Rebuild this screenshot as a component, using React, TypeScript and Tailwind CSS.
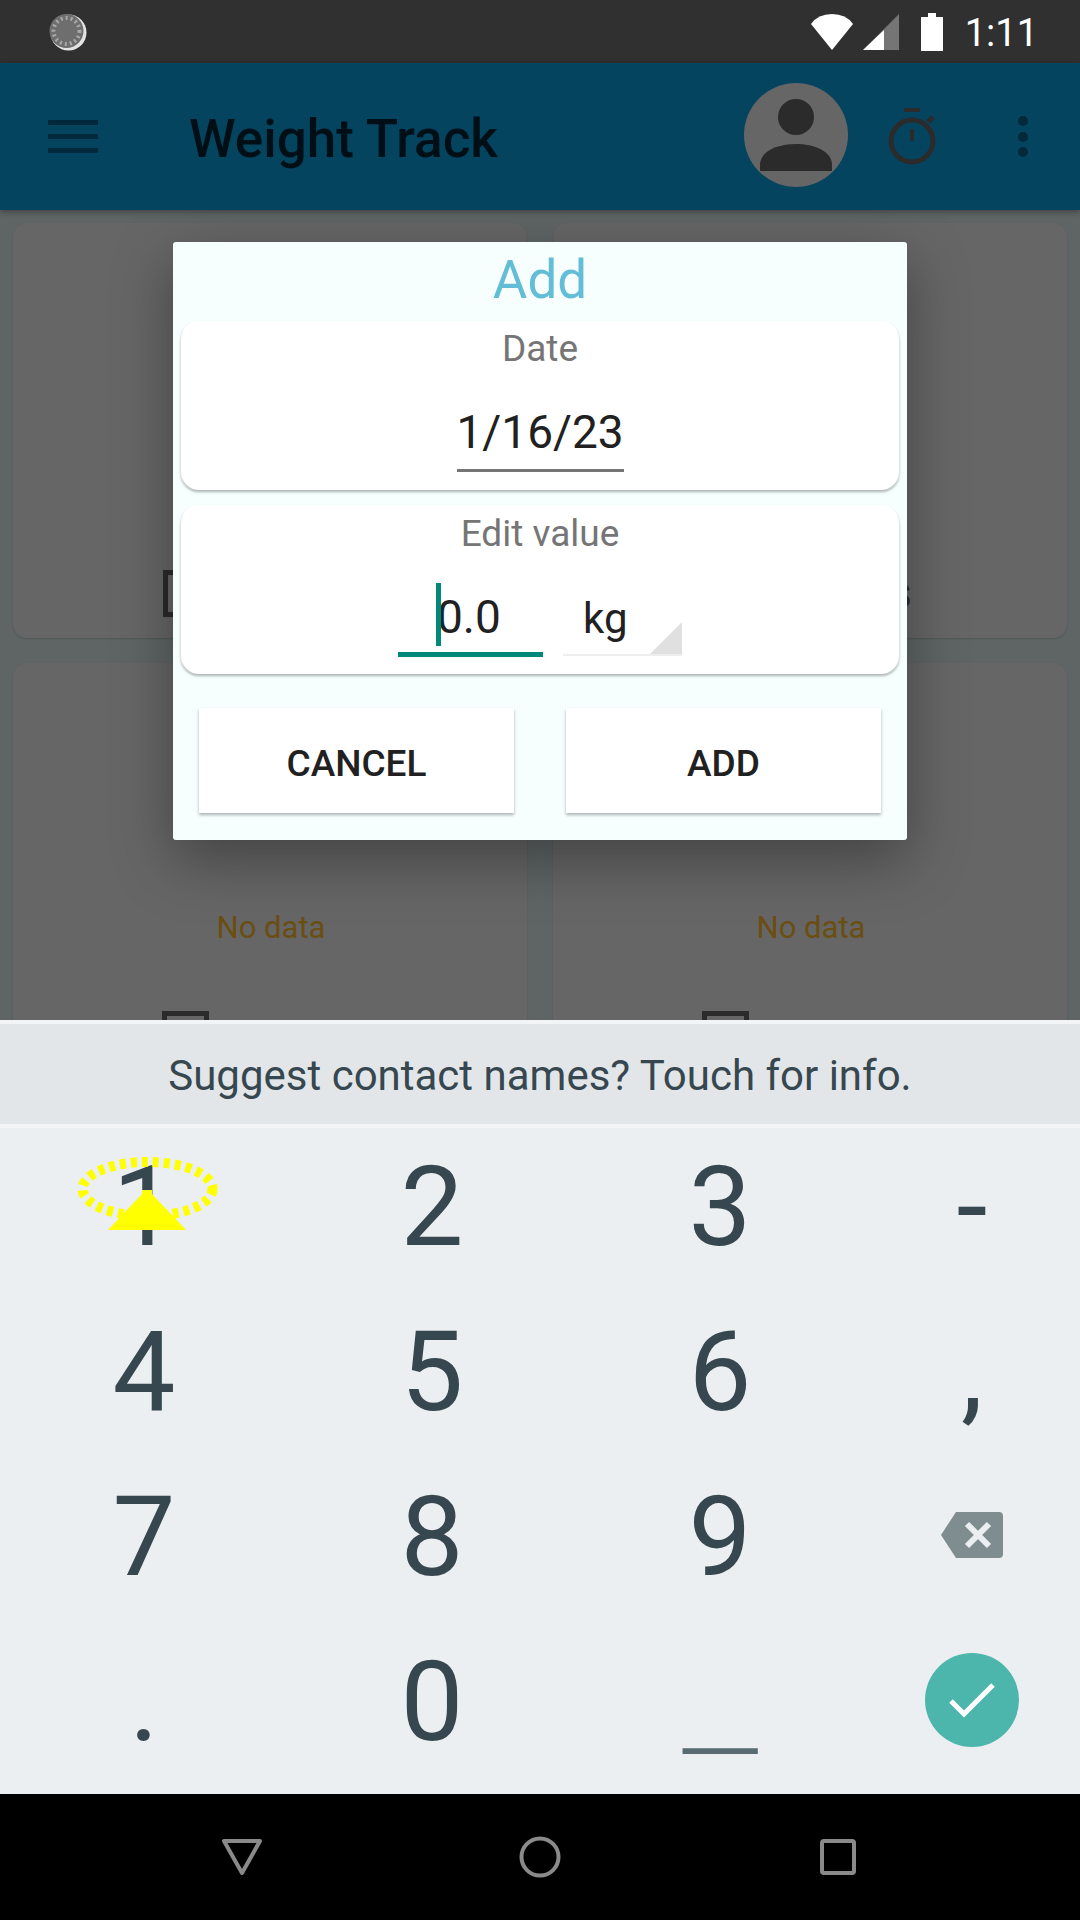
import React from 'react';

const digitClass = 'flex items-center justify-center pb-[8px] text-[112px] leading-none text-[#37474f]';

function StatusBar() {
  return (
    <div className="h-[63px] shrink-0 bg-[#303030] flex items-center pl-[49px] pr-[42px]">
      {/* sync spinner */}
      <svg width="38" height="38" viewBox="0 0 38 38">
        <circle cx="19.5" cy="19.5" r="18" fill="#e4e4e4" />
        <circle cx="17.5" cy="18" r="17" fill="#6e6e6e" />
        <circle cx="17.5" cy="18" r="13" fill="none" stroke="#a8a8a8" strokeWidth="4" strokeDasharray="2 3" />
      </svg>
      <div className="flex-1" />
      <svg width="44" height="38" viewBox="0 0 44 38" className="mr-[9px]">
        <path d="M22 37 L1 11 Q8 1 22 1 Q36 1 43 11 Z" fill="#fff" />
      </svg>
      <svg width="36" height="36" viewBox="0 0 36 36" className="mr-[22px]">
        <path d="M36 0 V36 H0 Z" fill="#757575" />
        <path d="M21 16 V36 H0 Z" fill="#fff" />
      </svg>
      <svg width="22" height="38" viewBox="0 0 22 38" className="mr-[22px]">
        <path d="M7 0 H15 V4 H22 V38 H0 V4 H7 Z" fill="#fff" />
      </svg>
      <span className="pt-[2px] text-[38px] leading-none text-white">1:11</span>
    </div>
  );
}

function AppBar() {
  return (
    <div className="h-[147px] shrink-0 bg-[#04445f] flex items-center z-10 shadow-[0_2px_6px_rgba(0,0,0,0.35)]">
      <div className="w-[48px]" />
      <div className="w-[50px] flex flex-col gap-[9px]">
        <div className="h-[5px] bg-[#02293b]" />
        <div className="h-[5px] bg-[#02293b]" />
        <div className="h-[5px] bg-[#02293b]" />
      </div>
      <span className="ml-[91px] pt-[6px] text-[53px] font-medium leading-none text-[#000f16]">Weight Track</span>
      <div className="flex-1" />
      <div className="mb-[3px] w-[104px] h-[104px] rounded-full bg-[#666666] flex items-center justify-center">
        <svg width="72" height="72" viewBox="0 0 72 72">
          <circle cx="36" cy="18" r="18" fill="#2b2b2b" />
          <path d="M0 72 V66 C0 52 18 45 36 45 C54 45 72 52 72 66 V72 Z" fill="#2b2b2b" />
        </svg>
      </div>
      {/* stopwatch */}
      <svg width="52" height="58" viewBox="0 0 52 58" className="ml-[39px]" fill="none" stroke="#2b2b2b">
        <circle cx="25" cy="33" r="21" strokeWidth="5" />
        <path d="M17 2 H33" strokeWidth="4" />
        <path d="M25 21 V33" strokeWidth="4" />
        <path d="M41 14 L46 9" strokeWidth="5" />
      </svg>
      <div className="ml-[79px] mr-[52px] flex flex-col gap-[5.5px]">
        <div className="w-[10px] h-[10px] rounded-full bg-[#02293b]" />
        <div className="w-[10px] h-[10px] rounded-full bg-[#02293b]" />
        <div className="w-[10px] h-[10px] rounded-full bg-[#02293b]" />
      </div>
    </div>
  );
}

function DimmedCards() {
  return (
    <main className="flex-1 overflow-hidden bg-[#5f6565] px-[13px] pt-[13px] grid grid-cols-2 gap-x-[26px] gap-y-[25px] content-start">
      <div className="h-[415px] rounded-[14px] bg-[#666666] shadow-[0_1px_2px_rgba(0,0,0,0.15)] relative">
        <div className="absolute left-[150px] top-[347px] w-[47px] h-[47px] border-[5px] border-[#2b2b2b]" />
      </div>
      <div className="h-[415px] rounded-[14px] bg-[#666666] shadow-[0_1px_2px_rgba(0,0,0,0.15)] relative">
        <span className="absolute right-[155px] top-[346px] text-[46px] leading-none text-[#2b2b2b]">s</span>
      </div>
      <div className="h-[415px] rounded-[14px] bg-[#666666] shadow-[0_1px_2px_rgba(0,0,0,0.15)] flex flex-col items-center pt-[249px]">
        <span className="pl-[2px] text-[31px] leading-none text-[#6b4e12]">No data</span>
        <div className="self-start ml-[149px] mt-[68px] w-[47px] h-[47px] border-[5px] border-[#2b2b2b]" />
      </div>
      <div className="h-[415px] rounded-[14px] bg-[#666666] shadow-[0_1px_2px_rgba(0,0,0,0.15)] flex flex-col items-center pt-[249px]">
        <span className="pl-[2px] text-[31px] leading-none text-[#6b4e12]">No data</span>
        <div className="self-start ml-[149px] mt-[68px] w-[47px] h-[47px] border-[5px] border-[#2b2b2b]" />
      </div>
    </main>
  );
}

function AddDialog() {
  return (
    <div className="absolute left-[173px] top-[242px] w-[734px] h-[598px] rounded-[3px] bg-[#f6fffe] shadow-[0_20px_60px_rgba(0,0,0,0.35)] px-[8px] flex flex-col">
      <div className="h-[79px] pb-[2px] flex items-center justify-center text-[53px] leading-none text-[#64bdd6]">Add</div>
      <div className="h-[169px] rounded-[18px] bg-white shadow-[0_2px_3px_rgba(0,0,0,0.3)] flex flex-col items-center">
        <span className="mt-[5px] text-[37px] leading-[46px] text-[#757575]">Date</span>
        <span className="mt-[31px] text-[46px] leading-[58px] pb-[8px] text-[#212121] border-b-[3px] border-[#757575] w-[167px] text-center">1/16/23</span>
      </div>
      <div className="mt-[15px] h-[169px] rounded-[18px] bg-white shadow-[0_2px_3px_rgba(0,0,0,0.3)] flex flex-col items-center">
        <span className="mt-[6px] text-[37px] leading-[46px] text-[#757575]">Edit value</span>
        <div className="mt-[20px] flex items-end">
          <div className="w-[145px] h-[80px] border-b-[5px] border-[#00897b] pl-[39px] pt-[11px] relative">
            <div className="absolute left-[38px] top-[6px] w-[5px] h-[63px] bg-[#00897b]" />
            <span className="block text-[46px] leading-[58px] text-[#212121]">0.0</span>
          </div>
          <div className="ml-[20px] mb-[1px] w-[119px] h-[79px] border-b-[2px] border-[#eeeeee] pl-[20px] pt-[13px] relative">
            <span className="block text-[42px] leading-[58px] text-[#212121]">kg</span>
            <svg width="32" height="32" viewBox="0 0 32 32" className="absolute right-0 bottom-0">
              <path d="M32 0 V32 H0 Z" fill="#e0e0e0" />
            </svg>
          </div>
        </div>
      </div>
      <div className="mt-[34px] px-[18px] grid grid-cols-2 gap-[52px]">
        <div className="h-[105px] pt-[5px] bg-white shadow-[0_2px_3px_rgba(0,0,0,0.3)] flex items-center justify-center text-[37px] font-medium leading-none text-[#212121]">CANCEL</div>
        <div className="h-[105px] pt-[5px] bg-white shadow-[0_2px_3px_rgba(0,0,0,0.3)] flex items-center justify-center text-[37px] font-medium leading-none text-[#212121]">ADD</div>
      </div>
    </div>
  );
}

function Keyboard() {
  return (
    <div className="shrink-0 bg-[#eceff1] relative">
      <div className="h-[108px] pt-[3px] border-y-[4px] border-y-[#f2f4f5] bg-[#e2e6e9] flex items-center justify-center text-[42px] leading-none text-[#37474f]">
        Suggest contact names? Touch for info.
      </div>
      <div className="h-[666px] grid grid-cols-[288px_288px_288px_216px] grid-rows-[repeat(4,165px)]">
        <div className={digitClass}>1</div>
        <div className={digitClass}>2</div>
        <div className={digitClass}>3</div>
        <div className={digitClass}>-</div>
        <div className={digitClass}>4</div>
        <div className={digitClass}>5</div>
        <div className={digitClass}>6</div>
        <div className={digitClass}>,</div>
        <div className={digitClass}>7</div>
        <div className={digitClass}>8</div>
        <div className={digitClass}>9</div>
        <div className="flex items-center justify-center pb-[12px]">
          <svg width="64" height="48" viewBox="0 0 64 48">
            <path d="M16 1 H59 Q63 1 63 5 V43 Q63 47 59 47 H16 L1 24 Z" fill="#7f8c90" />
            <path d="M27 13 L49 35 M49 13 L27 35" stroke="#eceff1" strokeWidth="6" />
          </svg>
        </div>
        <div className={digitClass}>.</div>
        <div className={digitClass}>0</div>
        <div className="flex items-center justify-center pt-[30px] text-[112px] leading-none text-[#586a72]">
          <span className="scale-x-[1.5] scale-y-[0.7]">_</span>
        </div>
        <div className="flex items-center justify-center pb-[11px]">
          <div className="w-[94px] h-[94px] rounded-full bg-[#4db6ac] flex items-center justify-center">
            <svg width="46" height="36" viewBox="0 0 46 36">
              <path d="M2 19 L15 32 L44 3" fill="none" stroke="#fff" strokeWidth="5" />
            </svg>
          </div>
        </div>
      </div>
      {/* tap marker on top of the 1 key */}
      <svg width="144" height="84" viewBox="0 0 144 84" className="absolute left-[75px] top-[135px]">
        <ellipse cx="72.5" cy="34" rx="65" ry="27" fill="none" stroke="#ffff00" strokeWidth="10" strokeDasharray="6 5" />
        <path d="M67 35 H77 V39 L111 75 H33 L67 39 Z" fill="#ffff00" />
      </svg>
    </div>
  );
}

function NavBar() {
  return (
    <div className="h-[126px] shrink-0 bg-black flex items-center justify-center">
      <div className="w-[298px] flex justify-center">
        <svg width="42" height="38" viewBox="0 0 42 38"><path d="M3 3 H39 L21 35 Z" fill="none" stroke="#8a8a8a" strokeWidth="4" strokeLinejoin="round" /></svg>
      </div>
      <div className="w-[298px] flex justify-center">
        <svg width="42" height="42" viewBox="0 0 42 42"><circle cx="21" cy="21" r="18.5" fill="none" stroke="#8a8a8a" strokeWidth="4" /></svg>
      </div>
      <div className="w-[298px] flex justify-center">
        <svg width="36" height="36" viewBox="0 0 36 36"><rect x="2" y="2" width="32" height="32" rx="2" fill="none" stroke="#8a8a8a" strokeWidth="4" /></svg>
      </div>
    </div>
  );
}

export default function App() {
  return (
    <div className="relative w-[1080px] h-[1920px] overflow-hidden flex flex-col" style={{ fontFamily: 'Roboto, "Liberation Sans", sans-serif' }}>
      <StatusBar />
      <AppBar />
      <DimmedCards />
      <Keyboard />
      <NavBar />
      <AddDialog />
    </div>
  );
}
